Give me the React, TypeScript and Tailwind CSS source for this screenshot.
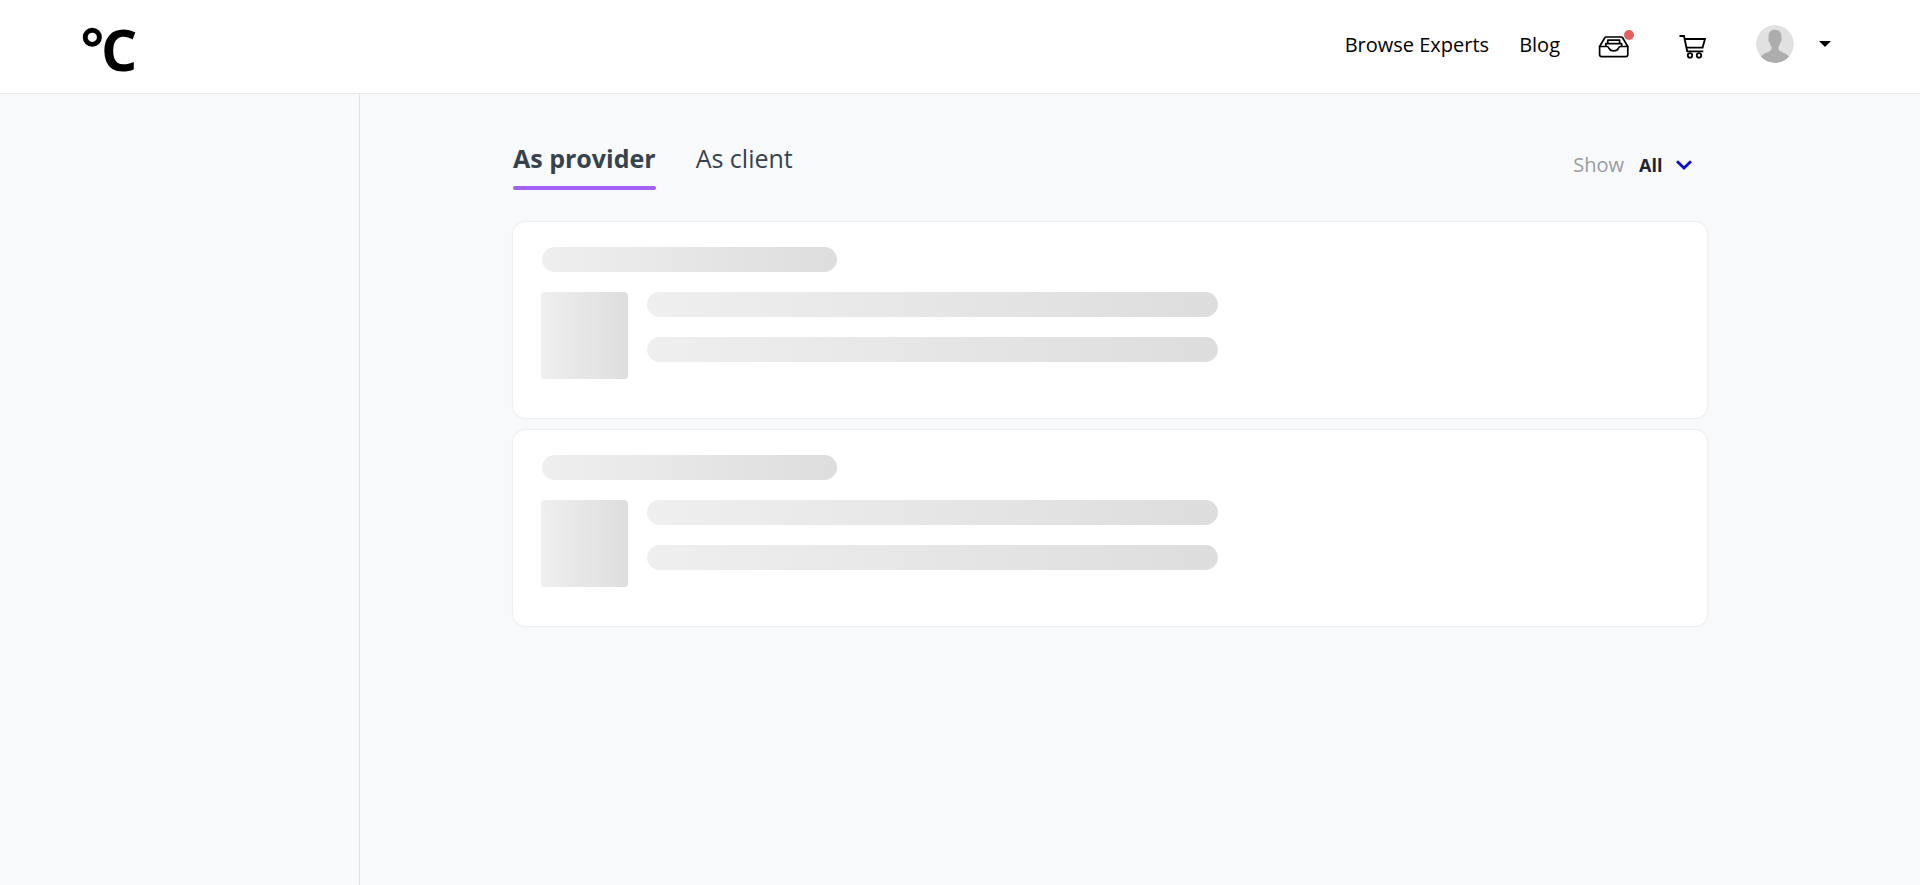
import React from "react";

function Logo() {
  return (
    <svg width="60" height="92" viewBox="0 0 60 92" role="img" aria-label="°C">
      <circle cx="10.3" cy="36.3" r="7.1" fill="none" stroke="#000" strokeWidth="4.9" />
      <text x="19" y="70" fontSize="57" fontWeight="700" fontFamily="'Open Sans', sans-serif">
        C
      </text>
    </svg>
  );
}

function InboxIcon() {
  return (
    <svg width="32" height="24" viewBox="0 0 32 24" fill="none" stroke="#000" strokeWidth="1.7" strokeLinejoin="round" strokeLinecap="round" aria-hidden="true">
      <path d="M1.6 11.5 L6.8 2.8 Q7.3 2 8.2 2 H23.2 Q24.1 2 24.6 2.8 L29.8 11.5" />
      <path d="M1.6 11.5 H8.6 Q10.4 11.5 10.9 13.1 Q12.2 15.9 15.7 15.9 Q19.2 15.9 20.5 13.1 Q21 11.5 22.8 11.5 H29.8 V19.5 Q29.8 21.6 27.6 21.6 H3.8 Q1.6 21.6 1.6 19.5 Z" />
      <path d="M9.8 8.4 V5.2 H21.6 V8.4 M7.8 11.2 V8.6 H23.6 V11.2" />
    </svg>
  );
}

function CartIcon() {
  return (
    <svg width="28" height="24" viewBox="0 0 28 24" fill="none" stroke="#000" strokeWidth="1.8" aria-hidden="true">
      <path d="M0.5 1 H5 L8.2 16.3 H24.3" />
      <path d="M5.8 4 H26 L23.6 12.6 H7.4" />
      <circle cx="11" cy="20.4" r="2.2" />
      <circle cx="20" cy="20.4" r="2.2" />
    </svg>
  );
}

function Avatar() {
  return (
    <svg width="38" height="38" viewBox="0 0 38 38" className="rounded-full" aria-hidden="true">
      <circle cx="19" cy="19" r="19" fill="#e1e1e1" />
      <path
        fill="#adadad"
        d="M19 4.8 C14.6 4.8 12.3 7.8 12.6 12.2 C12.7 13.2 12.2 13.6 12.3 14.8 C12.5 16.6 13.1 16.8 13.6 17.6 C14.2 20.2 15.2 21.2 15.8 22.4 C15.8 25.2 13.4 26.6 9.8 28 C7.4 29 5.8 30.2 5 31.8 Q10.5 38 19 38 Q27.5 38 33 31.8 C32 30.2 30.4 29 28 28 C24.6 26.6 22.2 25.2 22.2 22.4 C22.8 21.2 23.8 20.2 24.4 17.6 C24.9 16.8 25.5 16.6 25.7 14.8 C25.8 13.6 25.3 13.2 25.4 12.2 C25.7 7.8 23.4 4.8 19 4.8 Z"
      />
    </svg>
  );
}

function SkeletonCard() {
  return (
    <div className="rounded-xl bg-white px-7 pt-[25px] pb-[39px] shadow-[0_0_2px_rgba(0,0,0,0.15)]">
      <div className="ml-px h-[25px] w-[295px] rounded-full bg-linear-to-r/srgb from-[#efefef] to-[#dddddd]" />
      <div className="mt-5 flex gap-[19px]">
        <div className="size-[87px] shrink-0 rounded bg-linear-to-r/srgb from-[#efefef] to-[#dddddd]" />
        <div className="flex w-[571px] flex-col gap-5">
          <div className="h-[25px] rounded-full bg-linear-to-r/srgb from-[#efefef] to-[#dddddd]" />
          <div className="h-[25px] rounded-full bg-linear-to-r/srgb from-[#efefef] to-[#dddddd]" />
        </div>
      </div>
    </div>
  );
}

export default function App() {
  return (
    <div className="flex min-h-screen flex-col bg-[#f8f9fb] font-['Open_Sans',sans-serif]">
      <header className="flex h-[94px] items-center justify-between border-b border-[#e9e9eb] bg-white pr-[89px] pl-[82px]">
        <a href="#home" aria-label="Home">
          <Logo />
        </a>
        <nav className="flex items-center pb-1 text-xl text-black">
          <a href="#experts">Browse Experts</a>
          <a href="#blog" className="ml-[30px]">Blog</a>
          <a href="#inbox" aria-label="Inbox" className="relative ml-[38px] pt-1">
            <InboxIcon />
            <span className="absolute -top-px -right-1 size-2.5 rounded-full bg-[#e36060]" />
          </a>
          <a href="#cart" aria-label="Cart" className="ml-[49px] pt-1">
            <CartIcon />
          </a>
          <button type="button" aria-label="Account" className="ml-[49px] flex items-center gap-[25px] pb-0.5">
            <Avatar />
            <svg width="12" height="6" viewBox="0 0 12 6" aria-hidden="true">
              <path d="M0 0 H12 L6 6 Z" />
            </svg>
          </button>
        </nav>
      </header>
      <div className="flex flex-1">
        <aside className="w-[360px] shrink-0 border-r border-[#dfe3e8]" />
        <main className="flex-1 pt-11 pr-[213px] pl-[153px]">
          <div className="flex items-start justify-between">
            <div role="tablist" className="flex gap-10 text-[25px] leading-8 text-[#36424d]">
              <button type="button" role="tab" aria-selected="true">
                <span className="block h-12 pt-1 font-bold">As provider</span>
                <span className="block h-1 rounded-full bg-[#a45ff5]" />
              </button>
              <button type="button" role="tab" aria-selected="false" className="h-12 pt-1 pb-3">
                As client
              </button>
            </div>
            <div className="flex items-center pt-[13px] pr-[15px]">
              <label htmlFor="show" className="text-xl text-[#999ca1]">Show</label>
              <select id="show" className="ml-[15px] appearance-none bg-transparent text-lg font-bold text-[#1f252b]">
                <option>All</option>
              </select>
              <svg className="ml-[13px]" width="16" height="10" viewBox="0 0 16 10" fill="none" stroke="#0d0dd0" strokeWidth="2.8" aria-hidden="true">
                <path d="M1 1.2 L8 8 L15 1.2" />
              </svg>
            </div>
          </div>
          <div className="mt-8 flex flex-col gap-3">
            <SkeletonCard />
            <SkeletonCard />
          </div>
        </main>
      </div>
    </div>
  );
}
